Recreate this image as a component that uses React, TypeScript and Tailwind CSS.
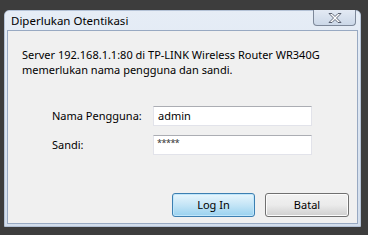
export default function App() {
  const font = { fontFamily: '"Noto Sans", "Segoe UI", sans-serif' };
  return (
    <div className="w-[378px] h-[247px] bg-white overflow-hidden" style={font}>
      <div className="w-[368px] h-[235px] bg-[#3d3d3d] pt-[10px] pl-[4px]">
        {/* window frame */}
        <div className="w-[357px] h-[217px] rounded-t-[5px] bg-gradient-to-b from-[#e6edf6] to-[#d3deec] border border-[#b4c2d6] flex flex-col">
          <div className="h-[18px] flex items-start justify-between pl-[6px] pr-[4px]">
            <span className="text-[11.5px] leading-[18px] text-black mt-[1px]">Diperlukan Otentikasi</span>
            <div className="w-[43px] h-[16px] -mt-px rounded-b-[4px] border border-t-0 border-[#7d8899] bg-gradient-to-b from-[#e3eaf4] to-[#ccd8e8] flex items-center justify-center">
              <svg width="14" height="10" viewBox="0 0 14 10">
                <path
                  d="M1 0.5h3l3 3l3-3h3l-4.5 4.5l4.5 4.5h-3l-3-3l-3 3h-3l4.5-4.5z"
                  fill="#ffffff"
                  stroke="#4d5566"
                  strokeWidth="0.9"
                  strokeLinejoin="round"
                />
              </svg>
            </div>
          </div>
          {/* client area */}
          <div className="flex-1 mx-[2px] mb-[2px] mt-px border border-[#98a9c2] bg-[#f0f0f0] flex flex-col">
            <p className="mt-[16px] pl-[14px] text-[11px] leading-[15px] text-black">
              Server 192.168.1.1:80 di TP-LINK Wireless Router WR340G
              <br />
              memerlukan nama pengguna dan sandi.
            </p>
            <div className="mt-[29px] flex flex-col gap-[9px]">
              <div className="flex items-center">
                <span className="w-[100px] pl-[44px] box-content text-[11px] text-black">Nama Pengguna:</span>
                <div className="ml-auto mr-[45px] w-[159px] h-[20px] bg-white border border-[#e2e3ea] border-t-[#abadb3] pl-[4px] text-[11px] leading-[18px] text-black">
                  admin
                </div>
              </div>
              <div className="flex items-center">
                <span className="w-[100px] pl-[44px] box-content text-[11px] text-black">Sandi:</span>
                <div className="ml-auto mr-[45px] w-[159px] h-[20px] bg-white border border-[#e2e3ea] border-t-[#abadb3] pl-[3px] text-[9px] leading-[14px] text-[#333] tracking-[-0.5px]">
                  *****
                </div>
              </div>
            </div>
            <div className="mt-auto mb-[6px] flex justify-end gap-[10px] pr-[8px]">
              <button className="w-[83px] h-[24px] rounded-[3px] border border-[#3c7fb1] bg-gradient-to-b from-[#e8f6fd] via-[#c4e5f6] to-[#98d1ef] shadow-[inset_0_0_0_1px_#c0e6fb] text-[11px] text-black">
                Log In
              </button>
              <button className="w-[84px] h-[24px] rounded-[3px] border border-[#707070] bg-gradient-to-b from-[#f2f2f2] via-[#ebebeb] to-[#cfcfcf] shadow-[inset_0_0_0_1px_#fcfcfc] text-[11px] text-black">
                Batal
              </button>
            </div>
          </div>
        </div>
      </div>
    </div>
  );
}
